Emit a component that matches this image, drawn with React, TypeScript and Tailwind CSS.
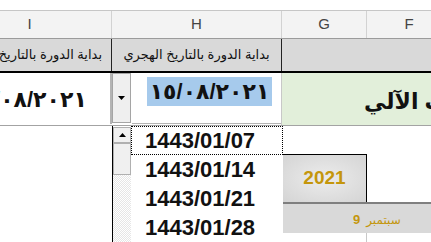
import React from "react";

const ar = "font-['Liberation_Sans','DejaVu_Sans',Arial,sans-serif]";

function UpTri() {
  return (
    <svg width="7" height="4" viewBox="0 0 7 4"><path d="M0 4 L3.5 0 L7 4 Z" fill="#000" /></svg>
  );
}
function DownTri() {
  return (
    <svg width="7" height="4" viewBox="0 0 7 4"><path d="M0 0 L3.5 4 L7 0 Z" fill="#000" /></svg>
  );
}

export default function App() {
  const items = ["1443/01/07", "1443/01/14", "1443/01/21", "1443/01/28"];
  return (
    <div className={`w-[431px] h-[242px] overflow-hidden bg-white ${ar}`}>
      <div className="ml-[-52px] w-[560px] flex flex-col">
        {/* top strip */}
        <div className="h-[11px] border-b border-[#c6c6c6] bg-white" />
        {/* column letters */}
        <div className="h-[28px] flex bg-[#f3f3f3] border-b border-[#9b9b9b] text-[15px] text-[#444]">
          <div className="w-[164px] shrink-0 border-r border-[#d2d2d2] flex items-center justify-center">I</div>
          <div className="w-[170px] shrink-0 border-r border-[#d2d2d2] flex items-center justify-center">H</div>
          <div className="w-[85px] shrink-0 border-r border-[#d2d2d2] flex items-center justify-center">G</div>
          <div className="w-[85px] shrink-0 border-r border-[#d2d2d2] flex items-center justify-center">F</div>
        </div>
        {/* header titles */}
        <div className="h-[34px] flex bg-[#d9d9d9] border-b-2 border-black text-[13px] text-[#111]">
          <div className="w-[164px] shrink-0 border-r border-[#222] flex items-center justify-start pr-[9px] overflow-hidden whitespace-nowrap" dir="rtl">
            بداية الدورة بالتاريخ الميلادي
          </div>
          <div className="w-[170px] shrink-0 border-r border-[#222] flex items-center justify-center overflow-hidden whitespace-nowrap" dir="rtl">
            بداية الدورة بالتاريخ الهجري
          </div>
          <div className="flex-1 min-w-0" />
        </div>
        {/* data row */}
        <div className="h-[53px] flex border-b border-[#a3a3a3]">
          <div className="w-[162px] shrink-0 min-w-0 flex items-center justify-center whitespace-nowrap text-[22px] font-bold text-[#111] pr-[4px]">
            <span dir="rtl">١٥/٠٨/٢٠٢١</span>
          </div>
          <div className="w-[172px] shrink-0 flex border-r border-[#c8c8c8] pb-[1px]">
            <div className="w-[22px] shrink-0 h-[51px] border-l-2 border-[#b4b4b4] bg-white flex">
              <div className="w-[19px] h-[50px] border border-[#a5a5a5] bg-[#efefef] flex items-center justify-center">
                <DownTri />
              </div>
            </div>
            <div className="flex-1 min-w-0 flex items-start justify-center border-b border-[#b4b4b4] pt-[4px] pl-[6px]">
              <span className="bg-[#a6caec] h-[29px] px-[3px] flex items-center text-[22px] font-bold text-[#111] whitespace-nowrap" dir="rtl">
                ١٥/٠٨/٢٠٢١
              </span>
            </div>
          </div>
          <div className="flex-1 min-w-0 bg-[#e2efda] flex items-center pl-[82px] pt-[5px] overflow-hidden">
            <span className="text-[22px] font-bold text-[#111] whitespace-nowrap" dir="rtl">
              الحاسب الآلي
            </span>
          </div>
        </div>
        {/* lower area */}
        <div className="h-[116px] flex">
          <div className="w-[164px] shrink-0 bg-white" />
          {/* dropdown list */}
          <div className="w-[171px] shrink-0 border-l border-black flex bg-white">
            <div className="w-[18px] shrink-0 flex flex-col">
              <div className="h-[16px] mt-[1px] border border-[#b0b0b0] bg-[#f0f0f0] flex items-center justify-center">
                <UpTri />
              </div>
              <div className="h-[32px] border border-[#b0b0b0] bg-[#f0f0f0]" />
              <div className="flex-1 bg-[repeating-conic-gradient(#e6e6e6_0_25%,#ffffff_0_50%)] bg-[length:2px_2px]" />
            </div>
            <div className="flex-1 min-w-0 flex flex-col">
              {items.map((t, i) => (
                <div
                  key={t}
                  className={`h-[29px] shrink-0 flex items-center pl-[13px] text-[22px] font-bold text-[#111] ${
                    i === 0 ? "border border-dotted border-black" : "border border-transparent"
                  }`}
                >
                  {t}
                </div>
              ))}
            </div>
          </div>
          {/* right area */}
          <div className="flex-1 min-w-0 flex flex-col">
            <div className="h-[28px] shrink-0 bg-white" />
            <div className="h-[48px] shrink-0 flex">
              <div className="w-[84px] shrink-0 border-t border-r border-black bg-[radial-gradient(ellipse_at_center,#ececec_0%,#d4d4d4_100%)] flex items-center justify-center">
                <span className="text-[19px] font-bold text-[#c4960c]">2021</span>
              </div>
              <div className="flex-1 bg-white" />
            </div>
            <div className="h-[31px] shrink-0 border-t-2 border-[#7f7f7f] bg-[#d9d9d9] flex items-center pl-[70px] pt-[2px] gap-[6px] text-[#c4960c] whitespace-nowrap">
              <b className="text-[13px]">9</b>
              <span className="text-[12px]" dir="rtl">سبتمبر</span>
            </div>
            <div className="flex-1 flex">
              <div className="w-[84px] shrink-0 border-r border-[#c8c8c8]" />
              <div className="flex-1" />
            </div>
          </div>
        </div>
      </div>
    </div>
  );
}
